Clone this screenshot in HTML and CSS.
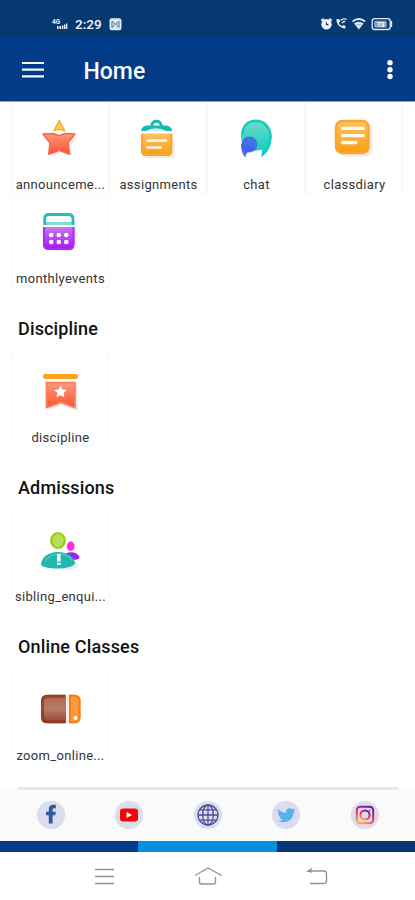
FILE: index.html
```html
<!DOCTYPE html>
<html lang="en">
<head>
<meta charset="utf-8">
<title>Home</title>
<link rel="stylesheet" href="styles.css">
</head>
<body>
<svg class="defs" width="0" height="0">
  <defs>
    <linearGradient id="red" x1="0" y1="0" x2="0" y2="1"><stop offset="0" stop-color="#fb9a80"/><stop offset="1" stop-color="#fb5330"/></linearGradient>
    <linearGradient id="orange" x1="0" y1="0" x2="0" y2="1"><stop offset="0" stop-color="#fbc362"/><stop offset="1" stop-color="#fa9d16"/></linearGradient>
    <linearGradient id="teal" x1="0" y1="0" x2="0" y2="1"><stop offset="0" stop-color="#70dccb"/><stop offset="1" stop-color="#08c8bd"/></linearGradient>
    <linearGradient id="purple" x1="0" y1="0" x2="0" y2="1"><stop offset="0" stop-color="#c778ef"/><stop offset="1" stop-color="#a412f5"/></linearGradient>
    <linearGradient id="brown" x1="0" y1="0" x2="0" y2="1"><stop offset="0" stop-color="#b4654c"/><stop offset=".5" stop-color="#b77c6a"/><stop offset="1" stop-color="#974029"/></linearGradient>
    <linearGradient id="insta" x1="0.2" y1="1" x2=".7" y2="0"><stop offset="0" stop-color="#ffac35"/><stop offset=".45" stop-color="#ef3264"/><stop offset="1" stop-color="#64218f"/></linearGradient>
  </defs>
</svg>
<div class="screen">
  <header>
    <div class="status">
      <div class="status-left">
        <svg width="18" height="16" viewBox="51 16 18 16" fill="#e9f0fa"><text class="net" x="52" y="23.5">4G</text><path d="M57 26h1.600v3H57zM59.400 26H61v3h-1.600zM61.800 25.500h1.600V29h-1.600zM64 24.500h1.500V29H64zM66 23.500h1.300V29H66z"/></svg>
        <span class="time">2:29</span>
        <svg class="mail" width="13" height="13" viewBox="0 0 13 13"><rect x=".5" y=".2" width="12" height="12" rx="2.200" fill="#dce7f2"/><path d="M3 9.600V3.300l3.500 3 3.500-3v6.300M3.200 9.500l2.300-3M9.800 9.500l-2.300-3" fill="none" stroke="#547492" stroke-width="1"/></svg>
      </div>
      <svg width="75" height="16" viewBox="320 16 75 16" fill="none" stroke="#e1ebf7">
        <circle cx="326.500" cy="24.300" r="5.200" fill="#f4f8fd" stroke="none"/><path d="M321.300 20.700l2.500-2M331.700 20.700l-2.500-2" stroke-width="2"/><path d="M326.500 22v2.600h2" stroke="#123c74" stroke-width="1.100"/>
        <path d="M336.300 19.300c.2 5 3.400 8.800 9 9.300l.3-2.700-2.400-1-1.400 1.300c-1.400-.8-2.300-1.900-2.900-3.200l1.200-1.500-1-2.400z" fill="#e1ebf7" stroke="none"/><path d="M340.500 20.500c2-2 3.800-2 6-1M342 23.200c.8-1.600 2-2 3.200-1.600" stroke-width="1.400"/>
        <path d="M352.500 21.500q6.300-5 12.600 0" stroke-width="1.800"/><path d="M354 23.500q4.800-3.400 9.600 0l-4.800 6z" fill="#e1ebf7" stroke="none"/><path d="M355.500 25.300q3.300-2.300 6.600 0" stroke="#6f8fb6" stroke-width=".7"/>
        <rect x="372.200" y="18.700" width="18" height="10.800" rx="2.600" stroke-width="1.300"/><path d="M391.500 21v6" stroke-width="1.400"/><rect x="374.200" y="20.700" width="12.500" height="6.800" rx="1" fill="#8da6c6" stroke="none"/><text class="battery" x="377" y="26.700" fill="#fff" stroke="none">73</text>
      </svg>
    </div>
    <div class="appbar">
      <svg width="24" height="20" viewBox="21 60 24 20" stroke="#f4f7ff" stroke-width="2.200"><path d="M22 63h22M22 69.700h22M22 76.300h22"/></svg>
      <h1>Home</h1>
      <svg class="more" width="8" height="22" viewBox="386 59 8 22" fill="#fff"><circle cx="390" cy="62.800" r="2.700"/><circle cx="390" cy="69.700" r="2.700"/><circle cx="390" cy="76.500" r="2.700"/></svg>
    </div>
  </header>

  <main>
    <section class="grid first">
      <div class="tile">
        <svg class="icon" viewBox="38 117 44 44"><path d="M61 134l4 8 12-4-8 9 4 9-11-4-9 4 3-8z" fill="#ece7e6"/><path d="M59.300 120.300l5.500 10.500-5.500-1.500-5.300 1.300z" fill="#fbc45b" stroke="#f8aa27" stroke-width="1.200" stroke-linejoin="round"/><path d="M43 134l10.500-.5 5.500 2.300 6-2.300 10 .5-7 8.700 1.500 11.500-10.200-4-10.500 4 1.200-11.200z" fill="url(#red)" stroke="#fb6847" stroke-width="1.600" stroke-linejoin="round"/></svg>
        <span class="label">announceme...</span>
      </div>
      <div class="tile">
        <svg class="icon" viewBox="136 117 44 44"><rect x="144" y="136" width="30.500" height="22.500" rx="4" fill="#f1ece5"/><path d="M141.200 131c.4-4 3-5.600 7-5.600h2.200c.5-7.500 11.600-7.500 12.200 0h2.200c4 0 6.800 1.600 7.400 5.600zM153.200 125.400h6.600c-.5-3.700-6.100-3.700-6.600 0z" fill="#18b8b4" fill-rule="evenodd"/><path d="M145 131.200q11-6 22 0z" fill="#c8eeea"/><path d="M141.200 133.500h31V151q0 5-5 5h-21q-5 0-5-5z" fill="url(#orange)"/><path d="M142.200 134v17q0 4 4 4h21q4 0 4-4v-17" fill="none" stroke="#f7a629" stroke-width="2"/><path d="M147.500 140.700H166M147.500 147.500h13" stroke="#fff7e7" stroke-width="2.700" stroke-linecap="round"/></svg>
        <span class="label">assignments</span>
      </div>
      <div class="tile">
        <svg class="icon" viewBox="234 117 44 44"><path d="M241 138c-1-11 5-18.500 15-18.500s16.500 8 15.700 18.500c-.5 9-4 15-10.700 19.300.5-2.500 1.300-4.500.8-7.300-4 1.500-8 1-12.800 2l-6-4z" fill="url(#teal)"/><path d="M242.500 135c0-9 5.500-14 13.500-14s14.500 7 14.200 16c-.4 7-2.700 12-5.700 15" fill="none" stroke="#16cdbf" stroke-width="2.500"/><path d="M241 144c0 6 1.200 10.500 4.500 13.500.2-2.500.7-4 2.500-5.500l7-4z" fill="#4a72ee"/><path d="M247.500 153c4-3.500 9-1.500 14.500-3.500l-1 4-1.500-.7.300 3.200c-4-2.500-8-3-12.300-3z" fill="#fff"/><circle cx="249.300" cy="144.500" r="8" fill="#4759ee" opacity=".8"/></svg>
        <span class="label">chat</span>
      </div>
      <div class="tile">
        <svg class="icon" viewBox="332 117 44 44"><rect x="339" y="123" width="33.500" height="33.500" rx="7" fill="#ecebea"/><rect x="336" y="121" width="32.500" height="32" rx="6" fill="url(#orange)" stroke="#faa62b" stroke-width="2.400"/><path d="M342.500 128.300h20.500M342.500 135.700h20.500M342.500 142.500h13.500" stroke="#fffaf0" stroke-width="3.300" stroke-linecap="round"/></svg>
        <span class="label">classdiary</span>
      </div>
      <div class="tile solo">
        <svg class="icon" viewBox="38 211 44 44"><rect x="47" y="218" width="29.500" height="33" rx="6" fill="#f4edf6"/><path d="M44.700 223.700V219q0-4.500 4.500-4.500h19.300q4.500 0 4.500 4.500v4.700z" fill="#fff" stroke="#26beb6" stroke-width="2.800"/><path d="M46.200 223.700h25.400" stroke="#8bddd6" stroke-width="2.800"/><path d="M42 225.100h33v2h-33z" fill="#fff"/><path d="M43 227h31.500v17q0 6-6 6H49q-6 0-6-6z" fill="url(#purple)"/><path d="M44 227v17q0 5 5 5h19.500q5 0 5-5v-17" fill="none" stroke="#ad2bf5" stroke-width="1.800"/><g fill="#fff"><circle cx="51.200" cy="235" r="2.300"/><circle cx="58.800" cy="235" r="2.300"/><circle cx="66.300" cy="235" r="2.300"/><circle cx="51.200" cy="242" r="2.300"/><circle cx="58.800" cy="242" r="2.300"/><circle cx="66.300" cy="242" r="2.300"/></g></svg>
        <span class="label">monthlyevents</span>
      </div>
    </section>

    <h2>Discipline</h2>
    <section class="grid">
      <div class="tile">
        <svg class="icon" viewBox="38 370 44 44"><path d="M49 384h28.500v25.500l-15.500-5-13 4z" fill="#ece7e7"/><path d="M45.500 375.500h30" stroke="#f9a51c" stroke-width="5" stroke-linecap="round"/><path d="M46.500 381.700h28.400v24.800L61 401.300l-14.500 5.200z" fill="url(#red)" stroke="#f77e60" stroke-width="1.800"/><path d="M60.500 384.500l1.900 4 4.400.5-3.200 3 .8 4.300-3.900-2.100-3.900 2.100.8-4.300-3.200-3 4.400-.5z" fill="#fff"/></svg>
        <span class="label">discipline</span>
      </div>
    </section>

    <h2>Admissions</h2>
    <section class="grid">
      <div class="tile">
        <svg class="icon" viewBox="38 530 44 44"><ellipse cx="66" cy="565" rx="13" ry="5" fill="#efecf3"/><path d="M66 553c8-2.500 13 1 13.500 4.500 0 2-6 2.800-9 2z" fill="#9d23ef"/><ellipse cx="58" cy="540.500" rx="6.800" ry="7.500" fill="#b7df59" stroke="#93cf13" stroke-width="2.200"/><ellipse cx="70.700" cy="546.300" rx="3.900" ry="4.700" fill="#fa2ee3"/><path d="M41 564.500c.5-7.500 7.500-12.500 17-12.500S74.500 557 75 563.500c-3 6.500-31 6.500-34 1z" fill="#20b7b3"/><path d="M45 562c3-9 22-12 27-1" fill="none" stroke="#48c4bf" stroke-width="1.500"/><path d="M57 554h3.600v7.500H57zM57 562.700h3.600v2.200H57z" fill="#fff"/></svg>
        <span class="label">sibling_enqui...</span>
      </div>
    </section>

    <h2>Online Classes</h2>
    <section class="grid">
      <div class="tile">
        <svg class="icon" viewBox="38 688.5 44 44"><path d="M66 694.300H47q-6 0-6 6v16.500q0 6 6 6h19z" fill="url(#brown)"/><path d="M65 695.800H47.500q-5 0-5 5v15.500q0 5 5 5H65" fill="none" stroke="#8e351f" stroke-width="3" opacity=".75"/><path d="M69 694.300h5.500q6 0 6 6v16.500q0 6-6 6H69z" fill="#f9993c"/><path d="M70 695.300h4.500q5 0 5 5v16.500q0 5-5 5H70z" fill="none" stroke="#fa7d11" stroke-width="2"/><path d="M67.500 694.300v28.500" stroke="#fbebe5" stroke-width="2.500"/><circle cx="75.500" cy="717.500" r="2" fill="#fff"/></svg>
        <span class="label">zoom_online...</span>
      </div>
    </section>
  </main>

  <footer class="social">
    <span class="badge"><svg viewBox="0 0 28 28"><path d="M11.800 22.500v-8.200H9v-3.500h2.800V8.500c0-3.700 2-5.200 7-4.500v3.400c-2.400-.2-3.200.1-3.200 1.700v1.700h3.200l-.5 3.500h-2.700v8.200z" fill="#315b98"/></svg></span>
    <span class="badge"><svg viewBox="0 0 28 28"><rect x="5" y="7.500" width="18" height="13" rx="3" fill="#f50708"/><path d="M11.500 11v6l5.500-3z" fill="#fff"/></svg></span>
    <span class="badge"><svg viewBox="0 0 28 28" fill="none" stroke="#4d4e96" stroke-width="1.300"><circle cx="14" cy="14" r="10"/><ellipse cx="14" cy="14" rx="5.300" ry="10"/><path d="M14 4v20M4 14h20M5.500 8.800h17M5.500 19.200h17"/></svg></span>
    <span class="badge"><svg viewBox="0 0 28 28"><path d="M6 8c2.300 2.600 4.900 3.700 8 3.900-.7-3.900 3.700-6.200 6.500-3.600l2.500-.9-1.200 2.300 1.600-.3-1.900 2c.1 7.500-8.300 12.300-15.800 8.300 2.200.1 3.700-.4 5-1.500-1.800-.1-3-1.100-3.500-2.500h1.600c-1.900-.7-2.800-2-2.900-3.900l1.600.5C5.900 11.100 5.600 9.600 6 8z" fill="#59b2ed"/></svg></span>
    <span class="badge"><svg viewBox="0 0 28 28" fill="none" stroke="url(#insta)" stroke-width="2"><rect x="5.800" y="5.800" width="16.400" height="16.400" rx="3.500"/><circle cx="14" cy="14" r="4.600"/><circle cx="18.800" cy="9.300" r=".8" fill="#a92778" stroke="none"/></svg></span>
  </footer>
  <div class="strip"><i></i><i></i><i></i></div>
  <nav>
    <svg width="22" height="20" viewBox="94 867 22 20"><path d="M95 869.500h19M95 876.500h19M95 883.500h19"/></svg>
    <svg width="30" height="20" viewBox="193 867 30 20"><path d="M195 875.500l13-7.500 13.500 7.500M199.500 877v5q0 2 2 2h12q2 0 2-2v-5"/></svg>
    <svg width="22" height="20" viewBox="306 867 22 20"><path d="M312 868.500l-4 2.500h16q2.500 0 2.500 2.500v7.500q0 2.500-2.500 2.500h-14M308 871l4 1"/></svg>
  </nav>
</div>
</body>
</html>
```
FILE: styles.css
```css
* { box-sizing: border-box; }
body { margin: 0; background: #fff; font-family: Roboto, "Liberation Sans", sans-serif; color: #111; }
svg { display: block; flex: none; }
.defs { position: absolute; }
.screen { width: 415px; height: 900px; display: flex; flex-direction: column; overflow: hidden; }

header { height: 102px; border-bottom: 1px solid #8ba4cf; background: #023b87; }
.status { height: 38px; background: #063970; display: flex; justify-content: space-between; padding: 16px 20px 0 51px; }
.status-left { display: flex; }
.time { font-size: 13.5px; line-height: 16px; font-weight: 500; color: #f1f6fd; margin-left: 6px; width: 34px; }
.mail { margin-top: 2px; }
.net { font-size: 6.5px; font-weight: 700; }
.battery { font-size: 6.5px; font-weight: 700; }
.appbar { height: 63px; display: flex; align-items: center; padding: 0 21px; }
h1 { margin: 4px 0 0 38.5px; font-size: 23px; line-height: 28px; font-weight: 500; color: #f8faff; }
.more { margin-left: auto; }

main { height: 685px; padding-left: 11px; }
.grid { display: grid; grid-template-columns: repeat(4, 98px); }
.tile { height: 94px; padding-top: 18px; border: 1px solid #fafafa; border-left-color: #f9f9f9; border-right-color: #f9f9f9; display: flex; flex-direction: column; align-items: center; }
.first { row-gap: 2px; padding-bottom: 2px; }
.first .tile { height: 92px; padding-top: 14px; border-left-color: #f6f6f8; border-right-color: #f6f6f8; }
.first .solo { border-left-color: #f9f9f9; border-right-color: #f9f9f9; }
.icon { width: 44px; height: 44px; }
.label { font-size: 13px; line-height: 18px; margin: 14px 0 0 1px; letter-spacing: .32px; color: #333; white-space: nowrap; }
.first .label { margin-top: 15px; }
h2 { margin: 0 0 0 7px; height: 65px; padding: 30px 0 11px; font-size: 18px; line-height: 24px; font-weight: 500; letter-spacing: .15px; }
.first + h2 { height: 62px; padding-top: 27px; }

.social { height: 54px; flex: none; background: #fafafa; display: flex; align-items: center; justify-content: space-between; padding: 1px 36.5px 0 37px; background-image: linear-gradient(#e8e8e8, #e8e8e8); background-size: 380px 3px; background-position: 18px 0; background-repeat: no-repeat; }
.badge { width: 28px; height: 28px; border-radius: 50%; background: #dcdcef; }
.strip { height: 11px; flex: none; display: flex; }
.strip i { flex: 1; background: #073874; }
.strip i:first-child { background: #023b87; }
.strip i:nth-child(2) { background: #068fe0; }
nav { flex: 1; display: flex; justify-content: space-between; padding: 15px 87px 0 94px; }
nav svg:nth-child(2) { margin-right: 7px; }
nav path { fill: none; stroke: #929292; stroke-width: 1.3; }
```
